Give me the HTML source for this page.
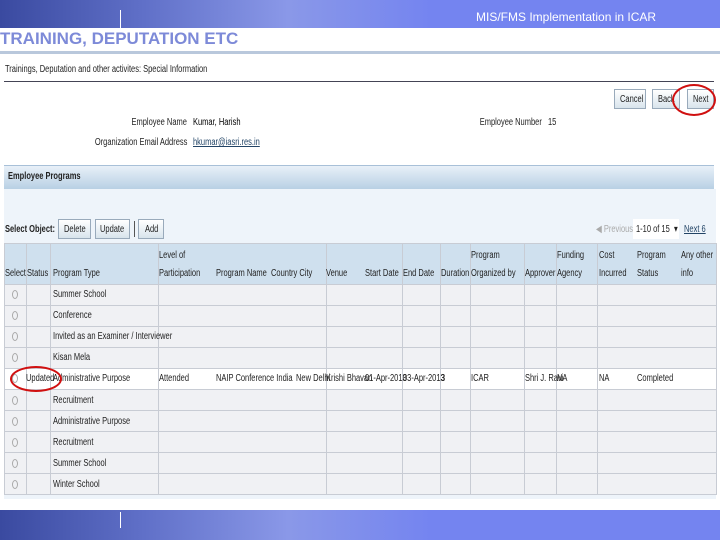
<!DOCTYPE html>
<html><head><style>
*{margin:0;padding:0;box-sizing:border-box}
body{width:720px;height:540px;position:relative;background:#fff;font-family:"Liberation Sans",sans-serif;overflow:hidden}
.a{position:absolute}
.band{background:linear-gradient(90deg,#3a4aa0 0%,#6070c8 20%,#8a98e8 40%,#7484f0 60%,#7484f0 100%)}
.s{font-size:10px;color:#222;transform:scaleX(.75);transform-origin:left;white-space:nowrap;font-family:"Liberation Sans Narrow","Liberation Sans",sans-serif;position:absolute;line-height:12px}
.s.rt{transform-origin:right;text-align:right}
table{border-collapse:collapse;position:absolute;left:4px;top:243px;width:712px;table-layout:fixed}
td{border:1px solid #c8ccd4;height:21px;background:#f0f1f4}
tr.h td{background:#cfe0ee;height:41px}
tr.hl td{background:#fff}
.btn{position:absolute;border:1px solid #9ab;background:linear-gradient(#fff,#d8e4ec);height:20px}
.r{position:absolute;width:6px;height:9px;border:1px solid #aaa;border-radius:50%}
</style></head><body>
<div class="a band" style="left:0;top:0;width:720px;height:28px"></div>
<div class="a" style="left:120px;top:10px;width:1px;height:18px;background:#fff"></div>
<div class="a" style="left:476px;top:10px;font-size:12px;color:#fff">MIS/FMS Implementation in ICAR</div>
<div class="a" style="left:0;top:29px;font-size:17px;font-weight:bold;color:#7d8ad8">TRAINING, DEPUTATION ETC</div>
<div class="a" style="left:0;top:51px;width:720px;height:3px;background:#b9c8dc"></div>
<div class="s" style="left:5px;top:64px">Trainings, Deputation and other activites: Special Information</div>
<div class="a" style="left:4px;top:81px;width:710px;height:1px;background:#445"></div>
<div class="btn" style="left:614px;top:89px;width:32px"></div><div class="s" style="left:620px;top:94px">Cancel</div>
<div class="btn" style="left:652px;top:89px;width:28px"></div><div class="s" style="left:658px;top:94px">Back</div>
<div class="btn" style="left:687px;top:89px;width:27px"></div><div class="s" style="left:693px;top:94px">Next</div>
<div class="a" style="left:672px;top:84px;width:44px;height:32px;border:2px solid #d01010;border-radius:50%"></div>
<div class="s rt" style="right:533px;top:117px">Employee Name</div>
<div class="s" style="left:193px;top:117px;color:#000">Kumar, Harish</div>
<div class="s rt" style="right:533px;top:137px">Organization Email Address</div>
<div class="s" style="left:193px;top:137px;color:#246;text-decoration:underline">hkumar@iasri.res.in</div>
<div class="s rt" style="right:178px;top:117px">Employee Number</div>
<div class="s" style="left:548px;top:117px">15</div>
<div class="a" style="left:4px;top:165px;width:710px;height:24px;background:linear-gradient(#e8f0f8,#b8d0e4);border-top:1px solid #a8c0d8"></div>
<div class="s" style="left:8px;top:171px;font-weight:bold">Employee Programs</div>
<div class="a" style="left:4px;top:189px;width:712px;height:310px;background:#eef4fa"></div>
<div class="s" style="left:5px;top:224px;font-weight:bold">Select Object:</div>
<div class="btn" style="left:58px;top:219px;width:33px"></div><div class="s" style="left:64px;top:224px">Delete</div>
<div class="btn" style="left:95px;top:219px;width:35px"></div><div class="s" style="left:100px;top:224px">Update</div>
<div class="a" style="left:134px;top:221px;width:1px;height:16px;background:#555"></div>
<div class="btn" style="left:138px;top:219px;width:26px"></div><div class="s" style="left:145px;top:224px">Add</div>
<div class="s" style="left:596px;top:224px;color:#aaa">◀ Previous</div>
<div class="a" style="left:633px;top:219px;width:46px;height:20px;background:#fff"></div>
<div class="s" style="left:636px;top:224px">1-10 of 15 &nbsp;▾</div>
<div class="s" style="left:684px;top:224px;color:#246;text-decoration:underline">Next 6</div>
<table>
<colgroup><col style="width:22px"><col style="width:24px"><col style="width:108px"><col style="width:168px"><col style="width:76px"><col style="width:38px"><col style="width:30px"><col style="width:54px"><col style="width:32px"><col style="width:41px"><col style="width:119px"></colgroup>
<tr class="h"><td></td><td></td><td></td><td></td><td></td><td></td><td></td><td></td><td></td><td></td><td></td></tr>
<tr><td></td><td></td><td></td><td></td><td></td><td></td><td></td><td></td><td></td><td></td><td></td></tr>
<tr><td></td><td></td><td></td><td></td><td></td><td></td><td></td><td></td><td></td><td></td><td></td></tr>
<tr><td></td><td></td><td></td><td></td><td></td><td></td><td></td><td></td><td></td><td></td><td></td></tr>
<tr><td></td><td></td><td></td><td></td><td></td><td></td><td></td><td></td><td></td><td></td><td></td></tr>
<tr class="hl"><td></td><td></td><td></td><td></td><td></td><td></td><td></td><td></td><td></td><td></td><td></td></tr>
<tr><td></td><td></td><td></td><td></td><td></td><td></td><td></td><td></td><td></td><td></td><td></td></tr>
<tr><td></td><td></td><td></td><td></td><td></td><td></td><td></td><td></td><td></td><td></td><td></td></tr>
<tr><td></td><td></td><td></td><td></td><td></td><td></td><td></td><td></td><td></td><td></td><td></td></tr>
<tr><td></td><td></td><td></td><td></td><td></td><td></td><td></td><td></td><td></td><td></td><td></td></tr>
<tr><td></td><td></td><td></td><td></td><td></td><td></td><td></td><td></td><td></td><td></td><td></td></tr>
</table>
<div class="s" style="left:159px;top:250px">Level of</div>
<div class="s" style="left:471px;top:250px">Program</div>
<div class="s" style="left:557px;top:250px">Funding</div>
<div class="s" style="left:599px;top:250px">Cost</div>
<div class="s" style="left:637px;top:250px">Program</div>
<div class="s" style="left:681px;top:250px">Any other</div>
<div class="s" style="left:5px;top:268px">Select</div>
<div class="s" style="left:27px;top:268px">Status</div>
<div class="s" style="left:53px;top:268px">Program Type</div>
<div class="s" style="left:159px;top:268px">Participation</div>
<div class="s" style="left:216px;top:268px">Program Name &nbsp;Country City</div>
<div class="s" style="left:326px;top:268px">Venue</div>
<div class="s" style="left:365px;top:268px">Start Date</div>
<div class="s" style="left:403px;top:268px">End Date</div>
<div class="s" style="left:441px;top:268px">Duration</div>
<div class="s" style="left:471px;top:268px">Organized by</div>
<div class="s" style="left:525px;top:268px">Approver</div>
<div class="s" style="left:557px;top:268px">Agency</div>
<div class="s" style="left:599px;top:268px">Incurred</div>
<div class="s" style="left:637px;top:268px">Status</div>
<div class="s" style="left:681px;top:268px">info</div>
<div class="r" style="left:12px;top:290px"></div><div class="s" style="left:53px;top:289px">Summer School</div>
<div class="r" style="left:12px;top:311px"></div><div class="s" style="left:53px;top:310px">Conference</div>
<div class="r" style="left:12px;top:332px"></div><div class="s" style="left:53px;top:331px">Invited as an Examiner / Interviewer</div>
<div class="r" style="left:12px;top:353px"></div><div class="s" style="left:53px;top:352px">Kisan Mela</div>
<div class="r" style="left:12px;top:374px"></div>
<div class="s" style="left:26px;top:373px">Updated</div>
<div class="s" style="left:53px;top:373px">Administrative Purpose</div>
<div class="s" style="left:159px;top:373px">Attended</div>
<div class="s" style="left:216px;top:373px">NAIP Conference India</div>
<div class="s" style="left:296px;top:373px">New Delhi</div>
<div class="s" style="left:326px;top:373px">Krishi Bhavan</div>
<div class="s" style="left:365px;top:373px">01-Apr-2013</div>
<div class="s" style="left:403px;top:373px">03-Apr-2013</div>
<div class="s" style="left:441px;top:373px">3</div>
<div class="s" style="left:471px;top:373px">ICAR</div>
<div class="s" style="left:525px;top:373px">Shri J. Ravi</div>
<div class="s" style="left:557px;top:373px">NA</div>
<div class="s" style="left:599px;top:373px">NA</div>
<div class="s" style="left:637px;top:373px">Completed</div>
<div class="r" style="left:12px;top:396px"></div><div class="s" style="left:53px;top:395px">Recruitment</div>
<div class="r" style="left:12px;top:417px"></div><div class="s" style="left:53px;top:416px">Administrative Purpose</div>
<div class="r" style="left:12px;top:438px"></div><div class="s" style="left:53px;top:437px">Recruitment</div>
<div class="r" style="left:12px;top:459px"></div><div class="s" style="left:53px;top:458px">Summer School</div>
<div class="r" style="left:12px;top:480px"></div><div class="s" style="left:53px;top:479px">Winter School</div>
<div class="a" style="left:10px;top:366px;width:52px;height:26px;border:2px solid #d01010;border-radius:50%"></div>
<div class="a band" style="left:0;top:510px;width:720px;height:30px"></div>
<div class="a" style="left:120px;top:512px;width:1px;height:16px;background:#fff"></div>
</body></html>
